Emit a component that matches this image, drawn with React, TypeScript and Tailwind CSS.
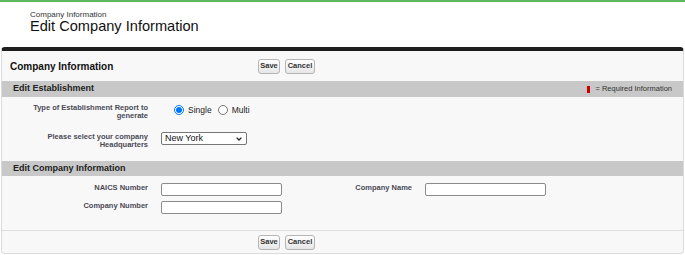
import React from 'react'

function Btn({ label, w }: { label: string; w: string }) {
  return (
    <button
      className={`${w} h-[15px] rounded-[3px] border border-[#b5b5b5] bg-gradient-to-b from-white to-[#e6e6e6] text-[7.5px] font-bold leading-none text-[#333] text-center`}
    >
      {label}
    </button>
  )
}

function Buttons() {
  return (
    <div className="flex gap-[5px]">
      <Btn label="Save" w="w-[22px]" />
      <Btn label="Cancel" w="w-[30px]" />
    </div>
  )
}

function Radio({ checked }: { checked?: boolean }) {
  return checked ? (
    <span className="flex h-[10px] w-[10px] shrink-0 items-center justify-center rounded-full border border-[#0075ff] bg-white">
      <span className="block h-[6px] w-[6px] rounded-full bg-[#0075ff]" />
    </span>
  ) : (
    <span className="block h-[10px] w-[10px] shrink-0 rounded-full border border-[#767676] bg-white" />
  )
}

function Label({ children }: { children: React.ReactNode }) {
  return (
    <div className="w-[146px] shrink-0 text-right text-[7.5px] font-bold leading-[8px] text-[#4a4a56]">
      {children}
    </div>
  )
}

function TextBox() {
  return <div className="h-[13px] w-[121px] rounded-[2px] border border-[#8a8a8a] bg-white" />
}

function SectionBar({ title, h, right }: { title: string; h: string; right?: boolean }) {
  return (
    <div className={`flex ${h} items-center justify-between bg-[#c8c8c8] pl-[11px] pr-[11px]`}>
      <span className="text-[9px] font-bold text-[#222]">{title}</span>
      {right && (
        <span className="flex items-center gap-[5px] text-[7.5px] text-[#333]">
          <span className="block h-[7px] w-[3px] bg-[#c00]" />= Required Information
        </span>
      )}
    </div>
  )
}

export default function App() {
  return (
    <div className="h-[255px] w-[685px] overflow-hidden border-t-2 border-[#5cb85c] bg-white font-['Liberation_Sans',Arial,sans-serif]">
      {/* page header */}
      <div className="pl-[30px] pt-[9px]">
        <div className="text-[8px] leading-[8px] text-[#333]">Company Information</div>
        <div className="text-[14.6px] leading-[15px] text-[#111]">Edit Company Information</div>
      </div>

      {/* panel */}
      <div className="ml-[1px] mt-[13px] w-[683px] rounded-[4px] border border-t-4 border-[#dcdcdc] border-t-[#1e1e1e] bg-[#f8f8f8]">
        <div className="flex h-[30px] items-center">
          <div className="w-[256px] pl-[8px] text-[10px] font-bold text-[#111]">Company Information</div>
          <Buttons />
        </div>

        <SectionBar title="Edit Establishment" h="h-[16px]" right />
        <div className="pt-[7px] pb-[12px]">
          <div className="flex items-start">
            <Label>
              Type of Establishment Report to
              <br />
              generate
            </Label>
            <div className="ml-[26px] flex h-[12px] items-center text-[8.5px] text-[#222]">
              <Radio checked />
              <span className="ml-[4px]">Single</span>
              <span className="ml-[6px]">
                <Radio />
              </span>
              <span className="ml-[4px]">Multi</span>
            </div>
          </div>
          <div className="mt-[12px] flex items-start">
            <Label>
              <div className="mt-[1px]">
                Please select your company
                <br />
                Headquarters
              </div>
            </Label>
            <div className="ml-[13px] flex h-[13px] w-[86px] items-center justify-between rounded-[2px] border border-[#767676] bg-white pl-[3px] pr-[4px] text-[9px] text-[#111]">
              <span>New York</span>
              <svg width="6" height="4" viewBox="0 0 6 4" fill="none">
                <path d="M0.6 0.6 L3 3 L5.4 0.6" stroke="#222" strokeWidth="1.3" />
              </svg>
            </div>
          </div>
        </div>

        <SectionBar title="Edit Company Information" h="h-[15px]" />
        <div className="border-b border-[#dedede] pt-[7px] pb-[16px]">
          <div className="flex items-start">
            <Label>
              <div className="mt-[1px]">NAICS Number</div>
            </Label>
            <div className="ml-[13px] w-[140px]">
              <TextBox />
            </div>
            <div className="w-[111px] text-right text-[7.5px] font-bold leading-[8px] text-[#4a4a56]">
              <div className="mt-[1px]">Company Name</div>
            </div>
            <div className="ml-[13px]">
              <TextBox />
            </div>
          </div>
          <div className="mt-[5px] flex items-start">
            <Label>
              <div className="mt-[1px]">Company Number</div>
            </Label>
            <div className="ml-[13px]">
              <TextBox />
            </div>
          </div>
        </div>
        <div className="flex h-[22px] items-center pl-[256px]">
          <Buttons />
        </div>
      </div>
    </div>
  )
}
